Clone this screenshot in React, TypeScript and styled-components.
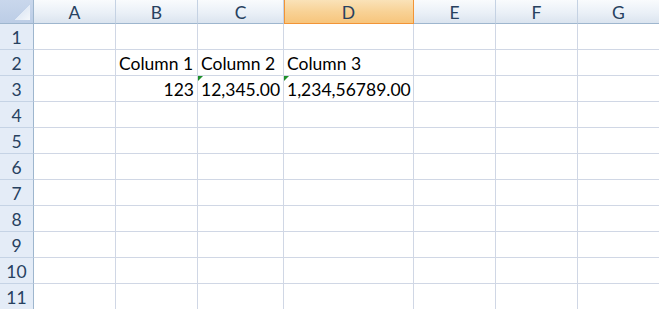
import React from "react";
import styled, { createGlobalStyle, css } from "styled-components";

const GlobalStyle = createGlobalStyle`
  html, body { margin: 0; padding: 0; background: #ffffff; overflow: hidden; }
  body { font-family: "Lato", "Open Sans", sans-serif; }
`;

const COLS = [
  { key: "A", width: 82 },
  { key: "B", width: 82 },
  { key: "C", width: 86 },
  { key: "D", width: 130 },
  { key: "E", width: 82 },
  { key: "F", width: 82 },
  { key: "G", width: 82 },
];

const ROWS = 11;

const Sheet = styled.div`
  display: grid;
  grid-template-columns: 34px ${COLS.map((c) => `${c.width}px`).join(" ")};
  grid-template-rows: 24px repeat(${ROWS}, 26px);
  width: 659px;
  height: 309px;
  overflow: hidden;
`;

const Corner = styled.div`
  position: relative;
  box-sizing: border-box;
  background: linear-gradient(#c9d7ec, #bccde6);
  border-right: 1px solid #9eb6ce;
  border-bottom: 1px solid #9eb6ce;
`;

const CornerTriangle = styled.div`
  position: absolute;
  right: 3px;
  bottom: 3px;
  width: 15px;
  height: 15px;
  background: linear-gradient(135deg, transparent 50%, #e3ebf6 50%, #f4f7fb 100%);
`;

const ColHeader = styled.div<{ $active?: boolean }>`
  box-sizing: border-box;
  display: flex;
  align-items: center;
  justify-content: center;
  font-size: 17.5px;
  color: #27415f;
  padding-top: 1px;
  background: linear-gradient(#f9fbfd 0%, #eaf0f7 55%, #dbe4ef 100%);
  border-right: 1px solid #c5d2e3;
  border-bottom: 1px solid #9eb6ce;
  ${(p) =>
    p.$active &&
    css`
      background: linear-gradient(#fae2b8 0%, #f8d296 50%, #f7c57c 100%);
      border-right: 1px solid #f29436;
      border-bottom: 1px solid #f29436;
      box-shadow: inset 1px 0 0 #f29436;
    `}
`;

const RowHeader = styled.div`
  box-sizing: border-box;
  display: flex;
  align-items: center;
  justify-content: center;
  font-size: 17.5px;
  color: #27415f;
  padding-top: 1px;
  background: #e4ecf7;
  border-right: 1px solid #9eb6ce;
  border-bottom: 1px solid #c5d3e5;
`;

const Cell = styled.div<{ $align?: "left" | "right" }>`
  position: relative;
  box-sizing: border-box;
  display: flex;
  align-items: center;
  justify-content: ${(p) => (p.$align === "right" ? "flex-end" : "flex-start")};
  padding: 1px 3px 0 3px;
  font-size: 17.5px;
  color: #000000;
  white-space: nowrap;
  border-right: 1px solid #d0d7e5;
  border-bottom: 1px solid #d0d7e5;
`;

const ErrorMark = styled.span`
  position: absolute;
  left: 0;
  top: 0;
  width: 0;
  height: 0;
  border-top: 5px solid #1e8f2a;
  border-right: 5px solid transparent;
`;

type CellData = { text: string; align?: "left" | "right"; flag?: boolean };

const DATA: Record<string, CellData> = {
  B2: { text: "Column 1" },
  C2: { text: "Column 2" },
  D2: { text: "Column 3" },
  B3: { text: "123", align: "right" },
  C3: { text: "12,345.00", flag: true },
  D3: { text: "1,234,56789.00", flag: true },
};

export default function App() {
  const rows = Array.from({ length: ROWS }, (_, i) => i + 1);
  return (
    <>
      <GlobalStyle />
      <Sheet>
        <Corner>
          <CornerTriangle />
        </Corner>
        {COLS.map((c) => (
          <ColHeader key={c.key} $active={c.key === "D"}>
            {c.key}
          </ColHeader>
        ))}
        {rows.map((r) => (
          <React.Fragment key={r}>
            <RowHeader>{r}</RowHeader>
            {COLS.map((c) => {
              const d = DATA[`${c.key}${r}`];
              return (
                <Cell key={c.key} $align={d?.align}>
                  {d?.flag && <ErrorMark />}
                  {d?.text}
                </Cell>
              );
            })}
          </React.Fragment>
        ))}
      </Sheet>
    </>
  );
}
